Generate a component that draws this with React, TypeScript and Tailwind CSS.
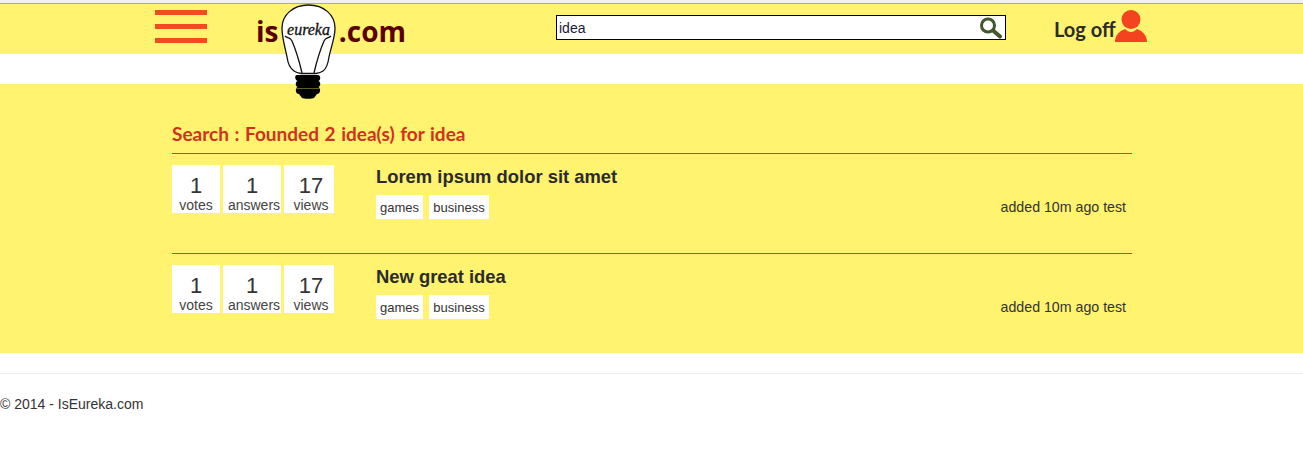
const ideas = [
  { id: 1, title: 'Lorem ipsum dolor sit amet' },
  { id: 2, title: 'New great idea' },
];

function Bulb() {
  return (
    <svg viewBox="0 0 55 96" className="absolute left-[281px] top-[4px] w-[55px] h-[96px]">
      <path
        d="M27.5 1C12 1 1 11 1 24C1 34 4 43 6 53C7 60 10 65 13 67C15 68.500 17 69 20 69.500L35 69.500C38 69 40 68.500 42 67C45 65 47 60 48 53C50 43 54 34 54 24C54 11 43 1 27.500 1Z"
        fill="#fff"
        stroke="#111"
        strokeWidth="1.3"
      />
      <path
        d="M4 32C7 35 9 33 11 37C14 44 18 56 21 69M50 32C47 35 45 33 43 37C40 44 36 56 33 69"
        fill="none"
        stroke="#111"
        strokeWidth="1.3"
      />
      <text
        x="27.5"
        y="31"
        textAnchor="middle"
        fontFamily="'Liberation Serif', serif"
        fontStyle="italic"
        fontSize="16"
        stroke="#111"
        strokeWidth="0.3"
        fill="#111"
      >
        eureka
      </text>
      <path
        d="M16 71L37 71C40 71 40 77 37 77C40 77 40 83 37 83C40 83 40 90 36 90L33 94C32 95 22 95 21 94L18 90C14 90 14 83 17 83C14 83 14 77 17 77C14 77 13 71 16 71Z"
        fill="#000"
      />
      <path d="M15 84.500L39 84.500" stroke="#8a8436" strokeWidth="0.7" />
    </svg>
  );
}

function Stat({
  count,
  label,
  className,
  labelClass = '',
}: {
  count: number;
  label: string;
  className: string;
  labelClass?: string;
}) {
  return (
    <div className={`bg-white h-12 flex flex-col items-center pt-[10px] ${className}`}>
      <span className="text-[22px] leading-[22px] text-[#333]">{count}</span>
      <span className={`text-sm leading-[16px] text-[#444] ${labelClass}`}>{label}</span>
    </div>
  );
}

function Tag({ children, className }: { children: string; className: string }) {
  return (
    <span className={`h-6 bg-white text-[13px] leading-[25px] text-[#333] text-center ${className}`}>{children}</span>
  );
}

export default function App() {
  return (
    <div className="relative min-h-[450px] bg-white text-[#333] font-['Liberation_Sans',sans-serif]">
      <div className="h-[3px] bg-[#f0f0f0]" />
      {/* Header */}
      <header className="h-[51px] border-t border-t-[#a8a8a8] border-b border-b-[#e8e8e0] bg-[#fff36f] flex items-center">
        <div className="ml-[155px] w-[52px] flex flex-col gap-[9px] -mt-[5px]">
          <div className="h-[5px] bg-[#f44a22]" />
          <div className="h-[5px] bg-[#f44a22]" />
          <div className="h-[5px] bg-[#f44a22]" />
        </div>
        <div className="ml-[49px] w-[150px] flex justify-between text-[28px] leading-none font-bold text-[#5a0000] font-['Open_Sans',sans-serif] mt-[5px]">
          <span>is</span>
          <span>.com</span>
        </div>
        <div className="ml-[150px] w-[450px] h-[25px] -mt-[2px] border border-black bg-white flex items-center justify-between px-[2px]">
          <span className="text-sm text-[#1a1a3a] mt-[1px]">idea</span>
          <svg viewBox="0 0 24 22" className="w-6 h-[22px]">
            <circle cx="9" cy="8.5" r="6.5" fill="none" stroke="#41582c" strokeWidth="3" />
            <path d="M14 13.5l7 6" stroke="#41582c" strokeWidth="4" strokeLinecap="round" />
          </svg>
        </div>
        <div className="ml-[48px] flex items-start">
          <span className="text-[20px] leading-[24px] font-bold text-[#2b2b2b] font-['Lato',sans-serif] mt-[1px]">Log off</span>
          <svg viewBox="0 0 32 32" className="w-8 h-8 -mt-[6px] -ml-[1px]">
            <ellipse cx="16" cy="9.5" rx="9.5" ry="9.5" fill="#f4431f" />
            <path d="M0 32c0-6 4-11 10-13 2 2 4 3 6 3s4-1 6-3c6 2 10 7 10 13Z" fill="#f4431f" />
          </svg>
        </div>
      </header>

      <Bulb />

      {/* Results */}
      <main className="mt-[30px] h-[269px] bg-[#fff36f] pl-[172px] pr-[171px] pt-[38px]">
        <h2 className="text-[19px] leading-[24px] font-bold [word-spacing:1px] text-[#d0321e] font-['Lato',sans-serif] mb-[7px]">
          Search : Founded 2 idea(s) for idea
        </h2>
        {ideas.map((idea) => (
          <div key={idea.id} className="h-[100px] border-t border-t-[#e8400a] pt-[11px] flex">
            <div className="flex gap-[3px] w-[204px]">
              <Stat count={1} label="votes" className="w-12" />
              <Stat count={1} label="answers" className="w-[58px]" labelClass="ml-1" />
              <Stat count={17} label="views" className="w-[50px] pl-1" />
            </div>
            <div className="flex-1 pr-[6px]">
              <h3 className="text-[18.4px] leading-[24px] font-bold text-[#2b2b2b]">{idea.title}</h3>
              <div className="mt-[6px] flex items-center">
                <Tag className="w-[47px]">games</Tag>
                <Tag className="w-[60px] ml-[6px]">business</Tag>
                <span className="ml-auto text-[14.2px] mt-[2px]">added 10m ago test</span>
              </div>
            </div>
          </div>
        ))}
      </main>

      {/* Footer */}
      <footer className="mt-5 border-t border-t-[#eeeeee] pt-5 text-sm leading-[20px]">
        © 2014 - IsEureka.com
      </footer>
    </div>
  );
}
